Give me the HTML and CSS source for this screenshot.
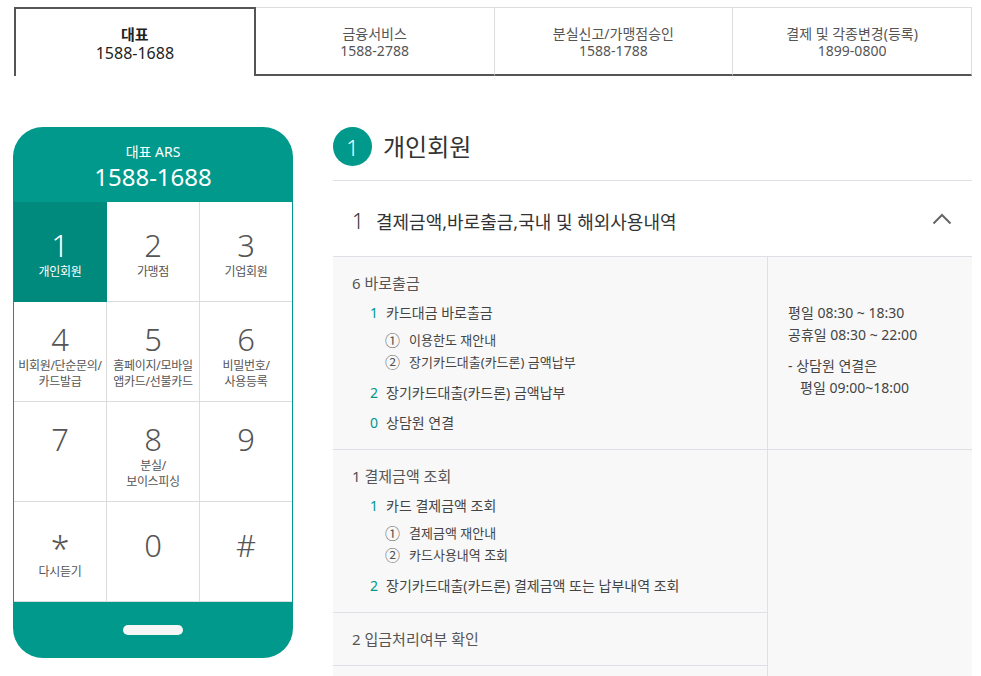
FILE: index.html
```html
<!DOCTYPE html>
<html lang="ko">
<head>
<meta charset="utf-8">
<title>ARS 안내</title>
<link rel="stylesheet" href="styles.css">
</head>
<body>
<div class="page">
  <ul class="tabs">
    <li class="tab tab--active"><span class="tab-name">대표</span><span class="tab-num">1588-1688</span></li>
    <li class="tab"><span class="tab-name">금융서비스</span><span class="tab-num">1588-2788</span></li>
    <li class="tab"><span class="tab-name">분실신고/가맹점승인</span><span class="tab-num">1588-1788</span></li>
    <li class="tab"><span class="tab-name">결제 및 각종변경(등록)</span><span class="tab-num">1899-0800</span></li>
  </ul>

  <div class="main">
    <div class="phone">
      <div class="phone-head">
        <div class="phone-title">대표 ARS</div>
        <div class="phone-number">1588-1688</div>
      </div>
      <div class="keypad">
        <div class="key key--active key--r1"><span class="key-digit">1</span><span class="key-label">개인회원</span></div>
        <div class="key key--r1"><span class="key-digit">2</span><span class="key-label">가맹점</span></div>
        <div class="key key--r1"><span class="key-digit">3</span><span class="key-label">기업회원</span></div>
        <div class="key key--r2"><span class="key-digit">4</span><span class="key-label">비회원/단순문의/<br>카드발급</span></div>
        <div class="key key--r2"><span class="key-digit">5</span><span class="key-label">홈페이지/모바일<br>앱카드/선불카드</span></div>
        <div class="key key--r2"><span class="key-digit">6</span><span class="key-label">비밀번호/<br>사용등록</span></div>
        <div class="key key--r2"><span class="key-digit">7</span></div>
        <div class="key key--r2"><span class="key-digit">8</span><span class="key-label">분실/<br>보이스피싱</span></div>
        <div class="key key--r2"><span class="key-digit">9</span></div>
        <div class="key key--r1"><span class="key-digit key-digit--star">*</span><span class="key-label">다시듣기</span></div>
        <div class="key key--r1"><span class="key-digit">0</span></div>
        <div class="key key--r1"><span class="key-digit">#</span></div>
      </div>
      <div class="phone-foot"><span class="home-bar"></span></div>
    </div>

    <div class="content">
      <div class="section-title">
        <span class="badge">1</span>
        <h2 class="section-name">개인회원</h2>
      </div>
      <div class="acc-head">
        <span class="acc-num">1</span>
        <span class="acc-text">결제금액,바로출금,국내 및 해외사용내역</span>
        <svg class="chevron" width="20" height="12" viewBox="0 0 20 12"><path d="M1.5 10.5 L10 2 L18.5 10.5" fill="none" stroke="#666" stroke-width="2"/></svg>
      </div>
      <div class="table">
        <div class="cell-left">
          <p class="menu-head">6 바로출금</p>
          <div class="item"><span class="num">1</span>카드대금 바로출금</div>
          <div class="sub"><span class="circ">①</span>이용한도 재안내</div>
          <div class="sub"><span class="circ">②</span>장기카드대출(카드론) 금액납부</div>
          <div class="item"><span class="num">2</span>장기카드대출(카드론) 금액납부</div>
          <div class="item"><span class="num">0</span>상담원 연결</div>
        </div>
        <div class="cell-right">
          <p class="hours">평일 08:30 ~ 18:30</p>
          <p class="hours">공휴일 08:30 ~ 22:00</p>
          <p class="hours hours--note">- 상담원 연결은</p>
          <p class="hours hours--indent">평일 09:00~18:00</p>
        </div>
        <div class="cell-left">
          <p class="menu-head">1 결제금액 조회</p>
          <div class="item"><span class="num">1</span>카드 결제금액 조회</div>
          <div class="sub"><span class="circ">①</span>결제금액 재안내</div>
          <div class="sub"><span class="circ">②</span>카드사용내역 조회</div>
          <div class="item"><span class="num">2</span>장기카드대출(카드론) 결제금액 또는 납부내역 조회</div>
        </div>
        <div class="cell-right cell-right--span"></div>
        <div class="cell-left">
          <p class="menu-head">2 입금처리여부 확인</p>
        </div>
        <div class="cell-left cell-left--blank"></div>
      </div>
    </div>
  </div>
</div>
</body>
</html>
```

FILE: styles.css
```css
* { box-sizing: border-box; }
html, body { margin: 0; padding: 0; background: #fff; }
body {
  font-family: "Noto Sans", "Noto Sans CJK KR", sans-serif;
  color: #444;
}
p { margin: 0; }
h2 { margin: 0; font-weight: normal; }

.page { padding: 7px 9px 0 13px; }

/* tabs */
.tabs {
  list-style: none;
  margin: 0 0 0 1px;
  padding: 0;
  display: flex;
  width: 958px;
  height: 69px;
}
.tab {
  flex: 1 1 0;
  display: flex;
  flex-direction: column;
  align-items: center;
  justify-content: center;
  border-top: 1px solid #ddd;
  border-right: 1px solid #ddd;
  border-bottom: 2px solid #555;
  color: #555;
  font-size: 14px;
  line-height: 17px;
  padding-top: 1px;
}
.tab--active {
  border: 2px solid #555;
  border-bottom: none;
  color: #222;
  font-size: 15px;
  line-height: 19px;
  padding-top: 2px;
}
.tab--active .tab-name { font-weight: 600; }
.tab--active .tab-num { font-size: 16px; }

/* main layout */
.main {
  display: flex;
  gap: 40px;
  margin-top: 51px;
  align-items: flex-start;
}

/* phone */
.phone {
  width: 280px;
  flex: none;
  background: #00998c;
  border-radius: 30px;
  overflow: hidden;
}
.phone-head {
  height: 75px;
  display: flex;
  flex-direction: column;
  align-items: center;
  padding-top: 15px;
  color: #fff;
}
.phone-title { font-size: 14px; line-height: 20px; }
.phone-number { font-size: 24px; line-height: 28px; margin-top: 1px; }

.keypad {
  margin: 0 1px;
  background: #fff;
  display: grid;
  grid-template-columns: 93px 93px 92px;
  grid-auto-rows: 100px;
}
.key {
  display: flex;
  flex-direction: column;
  align-items: center;
  border-right: 1px solid #dcdcdc;
  border-bottom: 1px solid #dcdcdc;
  color: #555;
  text-align: center;
}
.key:nth-child(3n) { border-right: none; }
.key--r1 { padding-top: 24px; }
.key--r2 { padding-top: 18px; }
.key--active { background: #00897d; color: #fff; border-right-color: #00897d; border-bottom-color: #00897d; }
.key-digit {
  font-family: "Noto Sans", sans-serif;
  font-weight: 300;
  font-size: 31px;
  line-height: 38px;
}
.key-digit--star { font-size: 34px; line-height: 38px; padding-top: 4px; height: 38px; }
.key-label {
  font-size: 12px;
  line-height: 16px;
  letter-spacing: -0.3px;
}
.phone-foot {
  height: 56px;
  display: flex;
  justify-content: center;
  align-items: center;
}
.home-bar {
  width: 60px;
  height: 10px;
  border-radius: 5px;
  background: #f6f6f6;
}

/* content */
.content {
  flex: 1;
  width: 639px;
}
.section-title {
  display: flex;
  align-items: center;
  gap: 11px;
  height: 54px;
  padding-bottom: 14px;
  border-bottom: 1px solid #dde1e6;
}
.badge {
  width: 39px;
  height: 39px;
  border-radius: 50%;
  background: #00998c;
  color: #fff;
  display: flex;
  align-items: center;
  justify-content: center;
  font-size: 22px;
  font-family: "Noto Sans", sans-serif;
  font-weight: 300;
}
.section-name {
  font-size: 24px;
  color: #333;
  line-height: 30px;
}
.acc-head {
  height: 76px;
  display: flex;
  align-items: center;
  padding: 5px 20px 0 19px;
  border-bottom: 1px solid #dde1e6;
  color: #333;
}
.acc-num {
  font-family: "Noto Sans", sans-serif;
  font-weight: 300;
  font-size: 21px;
  margin-right: 12px;
}
.acc-text { font-size: 18px; flex: 1; }
.chevron { display: block; margin-bottom: 4px; }

.table {
  display: grid;
  grid-template-columns: 434px 1fr;
  background: #f8f8f8;
}
.cell-left {
  grid-column: 1;
  padding: 16px 19px 16px 19px;
  border-bottom: 1px solid #dde1e6;
  font-size: 14px;
  color: #444;
}
.cell-left--blank { height: 60px; border-bottom: none; }
.cell-right {
  grid-column: 2;
  border-left: 1px solid #dde1e6;
  border-bottom: 1px solid #dde1e6;
  display: flex;
  flex-direction: column;
  justify-content: center;
  padding: 0 0 6px 20px;
  font-size: 14px;
  color: #444;
}
.cell-right--span { grid-row: span 3; border-bottom: none; }
.menu-head {
  font-size: 15px;
  line-height: 20px;
  height: 20px;
  color: #555;
}
.item {
  margin-top: 10px;
  padding-left: 18px;
  line-height: 20px;
  height: 20px;
}
.num {
  display: inline-block;
  width: 16px;
  color: #00978a;
}
.sub {
  padding-left: 33px;
  line-height: 22px;
  height: 22px;
  font-size: 13px;
}
.item + .sub { margin-top: 6px; }
.circ {
  display: inline-block;
  width: 24px;
  font-size: 15px;
  line-height: 22px;
  vertical-align: top;
  color: #555;
}
.hours { line-height: 22px; height: 22px; }
.hours--note { margin-top: 9px; }
.hours--indent { padding-left: 12px; }
```
